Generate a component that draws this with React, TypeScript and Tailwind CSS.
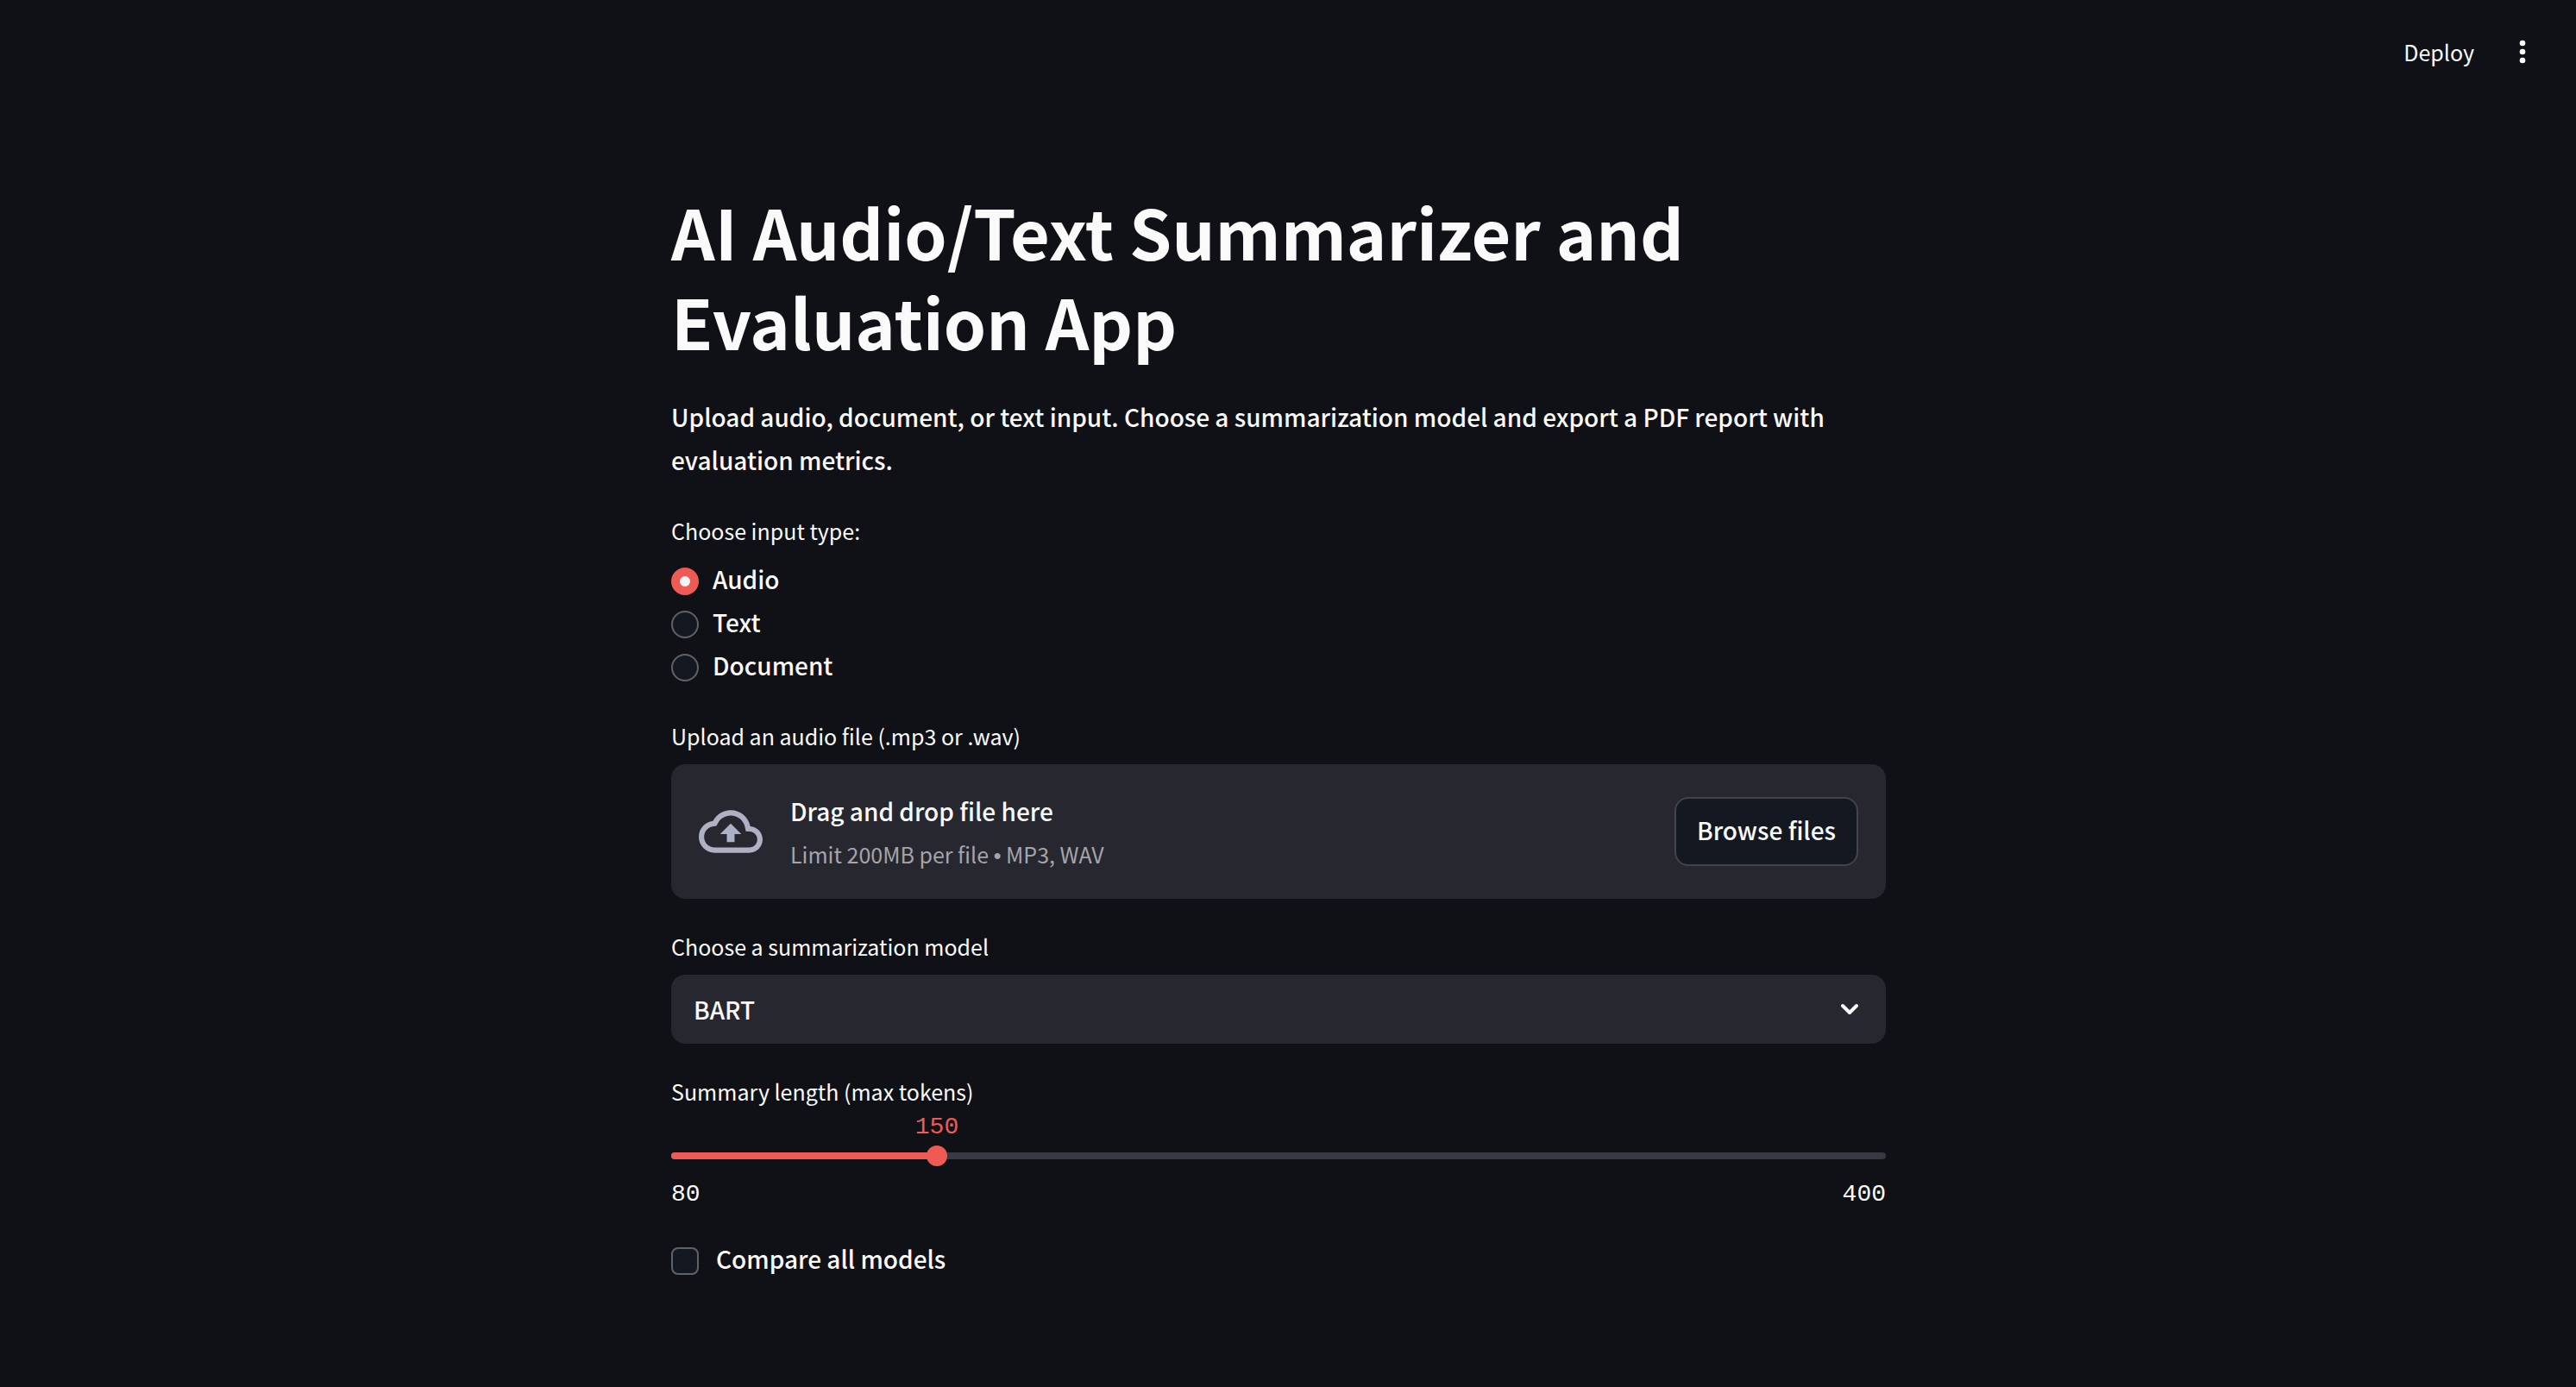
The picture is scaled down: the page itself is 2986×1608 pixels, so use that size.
import { useRef, useState } from "react";

const INPUT_TYPES = ["Audio", "Text", "Document"];
const MODELS = ["BART", "T5", "PEGASUS"];
const MIN_TOKENS = 80;
const MAX_TOKENS = 400;

const labelText = "block text-[25px] leading-[42px]";
const bodyText = "text-[28px] leading-[50px] font-medium";

function Header() {
  return (
    <header className="flex h-[120px] items-center justify-end gap-9 pr-[42px]">
      <button type="button" className="text-[25px] leading-[42px]">
        Deploy
      </button>
      <button type="button" aria-label="Main menu">
        <svg viewBox="0 0 24 24" className="size-10" fill="currentColor">
          <circle cx="12" cy="6" r="2" />
          <circle cx="12" cy="12" r="2" />
          <circle cx="12" cy="18" r="2" />
        </svg>
      </button>
    </header>
  );
}

function InputTypeChooser() {
  const [selected, setSelected] = useState("Audio");
  return (
    <fieldset className="mt-9">
      <legend className={labelText}>Choose input type:</legend>
      <div className="mt-[10px] flex flex-col items-start">
        {INPUT_TYPES.map((name) => (
          <label key={name} className="flex cursor-pointer items-start gap-4">
            <input
              type="radio"
              name="input-type"
              value={name}
              checked={selected === name}
              onChange={() => setSelected(name)}
              className="mt-3 size-8 shrink-0 appearance-none rounded-full border-2 border-[#616268] bg-[#141821] checked:border-10 checked:border-[#ee5b54] checked:bg-[#f2f3f7]"
            />
            <span className={bodyText}>{name}</span>
          </label>
        ))}
      </div>
    </fieldset>
  );
}

function FileUploader() {
  const fileInput = useRef<HTMLInputElement>(null);
  return (
    <section className="mt-9">
      <label htmlFor="audio-file" className={labelText}>
        Upload an audio file (.mp3 or .wav)
      </label>
      <div className="mt-3 flex h-[156px] items-center rounded-2xl bg-[#27272f] px-8">
        <svg viewBox="0 0 24 24" className="size-[74px] shrink-0 text-[#aeb0c4]" fill="currentColor">
          <path d="M19.35 10.04C18.67 6.59 15.64 4 12 4 9.11 4 6.6 5.64 5.35 8.04 2.34 8.36 0 10.91 0 14c0 3.31 2.69 6 6 6h13c2.76 0 5-2.24 5-5 0-2.64-2.05-4.78-4.65-4.96zM19 18H6c-2.21 0-4-1.79-4-4 0-2.05 1.53-3.76 3.56-3.97l1.07-.11.5-.95C8.08 7.14 9.94 6 12 6c2.62 0 4.88 1.86 5.39 4.43l.3 1.5 1.53.11c1.56.1 2.78 1.41 2.78 2.96 0 1.65-1.35 3-3 3zM8 13h2.55v3h2.9v-3H16l-4-4z" />
        </svg>
        <div className="ml-8 flex flex-1 flex-col gap-1">
          <span className={bodyText}>Drag and drop file here</span>
          <span className="text-[25px] leading-[42px] text-[#a5a5a9]">
            Limit 200MB per file <span className="font-['Liberation_Sans',sans-serif]">•</span> MP3,
            WAV
          </span>
        </div>
        <input ref={fileInput} id="audio-file" type="file" accept=".mp3,.wav" className="sr-only" />
        <button
          type="button"
          onClick={() => fileInput.current?.click()}
          className="h-20 rounded-2xl border-2 border-[#42434c] bg-[#141821] px-6 pb-1 text-[28px] leading-[50px] font-medium"
        >
          Browse files
        </button>
      </div>
    </section>
  );
}

function ModelSelect() {
  return (
    <section className="mt-[34px]">
      <label htmlFor="model" className={labelText}>
        Choose a summarization model
      </label>
      <div className="relative mt-3">
        <select
          id="model"
          className="block h-20 w-full appearance-none rounded-2xl bg-[#27272f] px-[26px] text-[28px] leading-[50px] font-medium"
        >
          {MODELS.map((m) => (
            <option key={m}>{m}</option>
          ))}
        </select>
        <svg
          viewBox="0 0 24 24"
          className="pointer-events-none absolute inset-y-0 right-[26px] my-auto size-8"
          fill="none"
          stroke="currentColor"
          strokeWidth="3"
          strokeLinecap="round"
          strokeLinejoin="round"
        >
          <path d="M6 9l6 6 6-6" />
        </svg>
      </div>
    </section>
  );
}

function LengthSlider() {
  const [tokens, setTokens] = useState(150);
  const percent = `${((tokens - MIN_TOKENS) / (MAX_TOKENS - MIN_TOKENS)) * 100}%`;
  return (
    <section className="mt-[34px]">
      <label htmlFor="tokens" className={labelText}>
        Summary length (max tokens)
      </label>
      <div className="font-['Liberation_Mono',monospace] text-[28px] leading-[42px]">
        <output
          htmlFor="tokens"
          className="block w-fit -translate-x-1/2 text-[#ee5b54]"
          style={{ marginLeft: percent }}
        >
          {tokens}
        </output>
        <div className="relative flex h-6 items-center">
          <div className="h-2 w-full overflow-hidden rounded-full bg-[#383a43]">
            <div className="h-full bg-[#ee5b54]" style={{ width: percent }} />
          </div>
          <input
            id="tokens"
            type="range"
            min={MIN_TOKENS}
            max={MAX_TOKENS}
            value={tokens}
            onChange={(e) => setTokens(Number(e.target.value))}
            className="absolute -inset-x-3 h-6 w-[calc(100%+24px)] appearance-none bg-transparent [&::-webkit-slider-thumb]:size-6 [&::-webkit-slider-thumb]:appearance-none [&::-webkit-slider-thumb]:rounded-full [&::-webkit-slider-thumb]:bg-[#ee5b54]"
          />
        </div>
        <div className="mt-3 flex justify-between">
          <span>{MIN_TOKENS}</span>
          <span>{MAX_TOKENS}</span>
        </div>
      </div>
    </section>
  );
}

export default function App() {
  return (
    <div className="min-h-screen bg-[#101116] font-['Noto_Sans_CJK_SC',sans-serif] text-[#fafafa]">
      <Header />
      <div className="pr-[22px]">
        <main className="mx-auto max-w-[1408px] pt-24 pb-20">
          <h1 className="text-[79px] leading-[104px] font-bold">
            AI Audio/Text Summarizer and Evaluation App
          </h1>
          <p className="mt-[34px] text-[28px] leading-[50px] font-medium">
            Upload audio, document, or text input. Choose a summarization model and export a PDF
            report with evaluation metrics.
          </p>
          <InputTypeChooser />
          <FileUploader />
          <ModelSelect />
          <LengthSlider />
          <label className="mt-7 flex w-fit cursor-pointer items-start gap-5">
            <input
              type="checkbox"
              className="mt-3 size-8 shrink-0 appearance-none rounded-lg border-2 border-[#616268] bg-[#141821] checked:bg-[#ee5b54]"
            />
            <span className={bodyText}>Compare all models</span>
          </label>
        </main>
      </div>
    </div>
  );
}
